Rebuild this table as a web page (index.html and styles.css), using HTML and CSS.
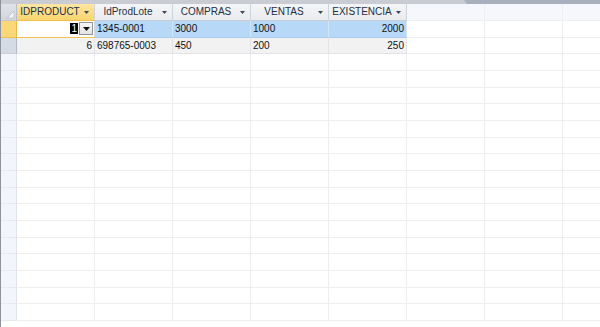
FILE: index.html
```html
<!DOCTYPE html>
<html>
<head>
<meta charset="utf-8">
<link rel="stylesheet" href="styles.css">
</head>
<body>
<div class="app">
  <div class="tabstrip"><div class="tab"></div></div>
  <div class="sheet">
    <div class="row head">
      <div class="sel corner"><svg width="9" height="9" viewBox="0 0 9 9"><polygon points="8,1 8,8 1,8" fill="#f4f5f7" stroke="#b9bec6" stroke-width="0.8"/></svg></div>
      <div class="hc active"><span class="ht">IDPRODUCT</span><svg class="arr" width="5" height="3" viewBox="0 0 5 3"><polygon points="0,0 5,0 2.5,3" fill="#3b4656"/></svg></div>
      <div class="hc"><span class="ht">IdProdLote</span><svg class="arr" width="5" height="3" viewBox="0 0 5 3"><polygon points="0,0 5,0 2.5,3" fill="#3b4656"/></svg></div>
      <div class="hc"><span class="ht">COMPRAS</span><svg class="arr" width="5" height="3" viewBox="0 0 5 3"><polygon points="0,0 5,0 2.5,3" fill="#3b4656"/></svg></div>
      <div class="hc"><span class="ht">VENTAS</span><svg class="arr" width="5" height="3" viewBox="0 0 5 3"><polygon points="0,0 5,0 2.5,3" fill="#3b4656"/></svg></div>
      <div class="hc"><span class="ht">EXISTENCIA</span><svg class="arr" width="5" height="3" viewBox="0 0 5 3"><polygon points="0,0 5,0 2.5,3" fill="#3b4656"/></svg></div>
      <div class="hc empty"></div>
      <div class="hc empty"></div>
      <div class="hc empty"></div>
    </div>
    <div class="row cur">
      <div class="sel selcur"></div>
      <div class="c edit"><span class="caret">1</span><span class="dd"><svg width="7" height="4" viewBox="0 0 7 4"><polygon points="0,0 7,0 3.5,4" fill="#111"/></svg></span></div>
      <div class="c">1345-0001</div>
      <div class="c">3000</div>
      <div class="c">1000</div>
      <div class="c r">2000</div>
      <div class="c e"></div><div class="c e"></div><div class="c e"></div>
    </div>
    <div class="row alt">
      <div class="sel seldata"></div>
      <div class="c r">6</div>
      <div class="c">698765-0003</div>
      <div class="c">450</div>
      <div class="c">200</div>
      <div class="c r">250</div>
      <div class="c e"></div><div class="c e"></div><div class="c e"></div>
    </div>
    <div class="row blank"><div class="sel"></div><div class="c"></div><div class="c"></div><div class="c"></div><div class="c"></div><div class="c"></div><div class="c"></div><div class="c"></div><div class="c"></div></div>
    <div class="row blank"><div class="sel"></div><div class="c"></div><div class="c"></div><div class="c"></div><div class="c"></div><div class="c"></div><div class="c"></div><div class="c"></div><div class="c"></div></div>
    <div class="row blank"><div class="sel"></div><div class="c"></div><div class="c"></div><div class="c"></div><div class="c"></div><div class="c"></div><div class="c"></div><div class="c"></div><div class="c"></div></div>
    <div class="row blank"><div class="sel"></div><div class="c"></div><div class="c"></div><div class="c"></div><div class="c"></div><div class="c"></div><div class="c"></div><div class="c"></div><div class="c"></div></div>
    <div class="row blank"><div class="sel"></div><div class="c"></div><div class="c"></div><div class="c"></div><div class="c"></div><div class="c"></div><div class="c"></div><div class="c"></div><div class="c"></div></div>
    <div class="row blank"><div class="sel"></div><div class="c"></div><div class="c"></div><div class="c"></div><div class="c"></div><div class="c"></div><div class="c"></div><div class="c"></div><div class="c"></div></div>
    <div class="row blank"><div class="sel"></div><div class="c"></div><div class="c"></div><div class="c"></div><div class="c"></div><div class="c"></div><div class="c"></div><div class="c"></div><div class="c"></div></div>
    <div class="row blank"><div class="sel"></div><div class="c"></div><div class="c"></div><div class="c"></div><div class="c"></div><div class="c"></div><div class="c"></div><div class="c"></div><div class="c"></div></div>
    <div class="row blank"><div class="sel"></div><div class="c"></div><div class="c"></div><div class="c"></div><div class="c"></div><div class="c"></div><div class="c"></div><div class="c"></div><div class="c"></div></div>
    <div class="row blank"><div class="sel"></div><div class="c"></div><div class="c"></div><div class="c"></div><div class="c"></div><div class="c"></div><div class="c"></div><div class="c"></div><div class="c"></div></div>
    <div class="row blank"><div class="sel"></div><div class="c"></div><div class="c"></div><div class="c"></div><div class="c"></div><div class="c"></div><div class="c"></div><div class="c"></div><div class="c"></div></div>
    <div class="row blank"><div class="sel"></div><div class="c"></div><div class="c"></div><div class="c"></div><div class="c"></div><div class="c"></div><div class="c"></div><div class="c"></div><div class="c"></div></div>
    <div class="row blank"><div class="sel"></div><div class="c"></div><div class="c"></div><div class="c"></div><div class="c"></div><div class="c"></div><div class="c"></div><div class="c"></div><div class="c"></div></div>
    <div class="row blank"><div class="sel"></div><div class="c"></div><div class="c"></div><div class="c"></div><div class="c"></div><div class="c"></div><div class="c"></div><div class="c"></div><div class="c"></div></div>
    <div class="row blank"><div class="sel"></div><div class="c"></div><div class="c"></div><div class="c"></div><div class="c"></div><div class="c"></div><div class="c"></div><div class="c"></div><div class="c"></div></div>
    <div class="row blank"><div class="sel"></div><div class="c"></div><div class="c"></div><div class="c"></div><div class="c"></div><div class="c"></div><div class="c"></div><div class="c"></div><div class="c"></div></div>
  </div>
</div>
</body>
</html>
```

FILE: styles.css
```css
* { box-sizing: border-box; }
html, body { margin: 0; padding: 0; }
body {
  width: 600px;
  height: 327px;
  overflow: hidden;
  background: #ffffff;
  font-family: "Liberation Sans", Arial, sans-serif;
  font-size: 10px;
  color: #111;
}
.app {
  display: flex;
  flex-direction: column;
  width: 600px;
  height: 327px;
  overflow: hidden;
  border-left: 1px solid #8d929b;
}
.tabstrip {
  height: 4px;
  background: #a9b0bd;
  display: flex;
  flex: none;
}
.tab {
  width: 466px;
  background: #c9ccd2;
  clip-path: polygon(0 0, 463px 0, 466px 100%, 0 100%);
}
.sheet {
  display: flex;
  flex-direction: column;
  overflow: hidden;
}
.row {
  display: flex;
  height: 16.667px;
  flex: none;
}
.row.head {
  height: 17px;
}
.sel {
  width: 16px;
  flex: none;
  background: #f3f5fc;
  border-right: 1px solid #dfe3eb;
  border-bottom: 1px solid #e6e9f0;
}
.corner {
  background: linear-gradient(#dfe2e7, #d3d7dd);
  border-right: 1px solid #b8bdc6;
  border-bottom: 1px solid #c3c8d0;
  display: flex;
  align-items: flex-end;
  justify-content: flex-end;
  padding: 0 1px 1px 0;
}
.corner svg { display: block; }
.selcur {
  background: #fbd77a;
  border-right: 1px solid #e9b94b;
  border-bottom: 1px solid #f0c04f;
}
.seldata {
  background: #d5dbe4;
  border-right: 1px solid #b3bac5;
  border-bottom: 1px solid #c9cfd9;
}
.hc {
  width: 78px;
  flex: none;
  display: flex;
  align-items: center;
  background: linear-gradient(#f4f5f7, #e9ebef);
  border-right: 1px solid #cfd4db;
  border-bottom: 1px solid #c8cdd5;
  padding: 0 5px 0 1px;
  color: #1e2f45;
}
.hc .ht {
  flex: 1;
  text-align: center;
  white-space: nowrap;
  font-size: 10px;
  line-height: 16px;
}
.hc .arr { flex: none; display: block; margin-left: 2px; }
.hc.active {
  background: linear-gradient(#fde6a3, #f9d56f);
  border-bottom: 1px solid #efbf4b;
}
.hc.empty {
  background: #f5f7fd;
  border-right: 1px solid #eceef3;
  border-bottom: 1px solid #eceef3;
}
.c {
  width: 78px;
  flex: none;
  padding: 0 2px;
  line-height: 15px;
  white-space: nowrap;
  border-right: 1px solid #ebedf1;
  border-bottom: 1px solid #eceef2;
}
.c.r { text-align: right; }
.cur .c {
  background: #b8d8f8;
  border-right: 1px solid #d4e5f7;
  border-bottom: 1px solid #a9cbee;
}
.cur .c.e, .alt .c.e {
  background: #ffffff;
  border-right: 1px solid #ebedf1;
  border-bottom: 1px solid #eceef2;
}
.alt .c {
  background: #f2f2f2;
  border-right: 1px solid #e2e3e6;
  border-bottom: 1px solid #e2e3e6;
}
.cur .c.edit {
  background: #ffffff;
  border-bottom: 1px solid #f0c24f;
  border-right: 1px solid #d4d8de;
  display: flex;
  align-items: center;
  justify-content: flex-end;
  padding: 0 1px 0 2px;
}
.caret {
  background: #000;
  color: #fff;
  line-height: 11px;
  padding: 0 1px;
  margin-right: 1px;
}
.dd {
  width: 14px;
  height: 13px;
  background: linear-gradient(#f7f7f7, #e3e3e3);
  border: 1px solid #8e939a;
  display: flex;
  align-items: center;
  justify-content: center;
}
.dd svg { display: block; }
```
